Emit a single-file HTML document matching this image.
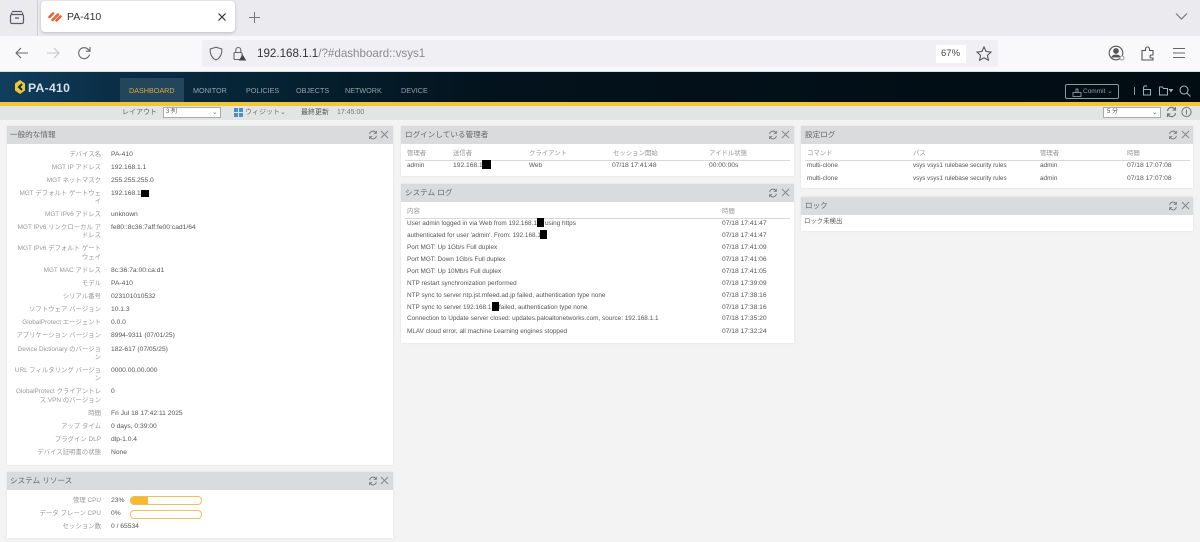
<!DOCTYPE html>
<html lang="ja"><head><meta charset="utf-8"><title>PA-410</title>
<style>
html,body{margin:0;padding:0;background:#f3f3f3}
body{width:1200px;height:542px;overflow:hidden;position:relative;font-family:"Liberation Sans","Noto Sans CJK JP",sans-serif;filter:blur(.3px)}
div,svg{position:absolute}
.t{white-space:nowrap;font-size:6.4px;line-height:9px;color:#555}
.d{font-size:6.7px}
.l{white-space:nowrap;font-size:6.4px;line-height:9px;color:#999;text-align:right;width:94px;left:7px}
.v{white-space:nowrap;font-size:6.7px;line-height:9px;color:#555;left:111px}
.h{white-space:nowrap;font-size:6.4px;line-height:9px;color:#959595}
.p{background:#fff;box-shadow:0 0 2px #ddd}
.ph{left:0;top:0;right:0;height:18px;background:#d9dbdc}
.pt{left:4px;top:3px;font-size:7.6px;line-height:12px;color:#666;white-space:nowrap}
.r{background:#000}
.ln{height:1px;background:#d8d8d8}
.nv{top:86px;font-size:7.2px;line-height:10px;color:#93a4af;white-space:nowrap}
.s{font-size:7px;color:#666}
</style></head><body>

<div style="left:0;top:0;width:1200px;height:36px;background:#eaeaef"></div>
<svg style="left:9px;top:9px" width="17" height="17" viewBox="0 0 17 17" fill="none" stroke="#5b5b66" stroke-width="1.2"><rect x="1.5" y="5.5" width="13" height="9" rx="1.5"/><path d="M3 2.5h10M6 9h4"/><path d="M2.5 5V3.500M13.500 5V3.500"/></svg>
<div style="left:37px;top:0;width:1px;height:36px;background:#cfcfd6"></div>
<div style="left:41px;top:1px;width:194px;height:31px;background:#fff;border-radius:4px;box-shadow:0 1px 3px rgba(0,0,0,.2)"></div>
<svg style="left:48px;top:11px" width="14" height="12" viewBox="0 0 14 12" fill="none" stroke="#e8633a" stroke-width="2.6" stroke-linecap="round"><path d="M1.500 6 5 2.500M4.500 9 10 3.500M8.500 9.500 12.500 5.500"/></svg>
<div class="t" style="left:67px;top:11px;font-size:10.500px;line-height:13px;color:#333">PA-410</div>
<svg style="left:217px;top:12px" width="10" height="10" viewBox="0 0 10 10" stroke="#333" stroke-width="1.200"><path d="M1.500 1.500l7 7M8.500 1.500l-7 7"/></svg>
<svg style="left:248px;top:11px" width="13" height="13" viewBox="0 0 13 13" stroke="#777" stroke-width="1"><path d="M6.500 1v11M1 6.500h11"/></svg>
<svg style="left:1175px;top:12px" width="13" height="9" viewBox="0 0 13 9" fill="none" stroke="#777" stroke-width="1.200"><path d="M1 1.500l5.500 5.500 5.500-5.500"/></svg>

<div style="left:0;top:36px;width:1200px;height:35px;background:#f9f9fb"></div>
<div style="left:0;top:71px;width:1200px;height:1px;background:#cfe0ea"></div>
<svg style="left:14px;top:46px" width="15" height="14" viewBox="0 0 15 14" fill="none" stroke="#666" stroke-width="1.100"><path d="M14 7H2M7 2 2 7l5 5"/></svg>
<svg style="left:46px;top:46px" width="15" height="14" viewBox="0 0 15 14" fill="none" stroke="#c4c4ca" stroke-width="1.100"><path d="M1 7h12M8 2l5 5-5 5"/></svg>
<svg style="left:77px;top:46px" width="15" height="15" viewBox="0 0 15 15" fill="none" stroke="#666" stroke-width="1.100"><path d="M12.500 8.500A5.500 5.500 0 1 1 11 3.200L13 5"/><path d="M13 1v4.200H8.800"/></svg>
<div style="left:202px;top:40px;width:796px;height:27px;background:#f0f0f4;border-radius:2px"></div>
<svg style="left:209px;top:46px" width="14" height="15" viewBox="0 0 14 15" fill="none" stroke="#666" stroke-width="1.100"><path d="M7 1.200 12.800 3c.2 5.500-1.500 9-5.800 11C2.700 12 1 8.500 1.200 3z"/></svg>
<svg style="left:233px;top:46px" width="14" height="15" viewBox="0 0 14 15" fill="none"><rect x="1" y="6.500" width="8" height="7" rx="1" stroke="#666" stroke-width="1.100"/><path d="M2.800 6.500V4a2.500 2.500 0 0 1 5 0v2.500" stroke="#666" stroke-width="1.100"/><path d="M9.500 8.500l3.800 6H5.800z" fill="#444"/></svg>
<div class="t" style="left:257px;top:46px;font-size:11.600px;line-height:16px;color:#8a8a90"><span style="color:#333">192.168.1.1</span>/?#dashboard::vsys1</div>
<div style="left:936px;top:45px;width:30px;height:18px;background:#fff"></div>
<div class="t" style="left:941px;top:48px;font-size:9.500px;line-height:12px;color:#444">67%</div>
<svg style="left:976px;top:46px" width="16" height="15" viewBox="0 0 16 15" fill="none" stroke="#555" stroke-width="1.100"><path d="M8 1l2.100 4.500 4.900.6-3.600 3.300 1 4.800L8 11.800l-4.400 2.400 1-4.800L1 6.100l4.900-.6z"/></svg>
<svg style="left:1108px;top:45px" width="18" height="17" viewBox="0 0 18 17" fill="none" stroke="#555" stroke-width="1.100"><circle cx="8" cy="8" r="6.800"/><circle cx="8" cy="6" r="2.300" fill="#555"/><path d="M4 12c1-2.500 7-2.500 8 0z" fill="#555"/><circle cx="14" cy="13" r="2" fill="#fff" stroke="#999"/></svg>
<svg style="left:1141px;top:46px" width="14" height="15" viewBox="0 0 14 15" fill="none" stroke="#555" stroke-width="1.100"><path d="M1 4.500h3.500V3a2 2 0 0 1 4 0v1.500H12V9h-1.500a1.500 1.500 0 0 0 0 3H12v2H1z"/></svg>
<svg style="left:1172px;top:47px" width="14" height="12" viewBox="0 0 14 12" stroke="#666" stroke-width="1.100"><path d="M1 1.500h12M1 6h12M1 10.500h12"/></svg>

<div style="left:0;top:72px;width:1200px;height:30px;background:linear-gradient(90deg,#103f5e 0,#0b2f48 100px,#05202f 300px,#03121c 500px,#020c13 100%)"></div>
<div style="left:0;top:102px;width:1200px;height:4px;background:#f2c535"></div>
<div style="left:120px;top:78px;width:64px;height:24px;background:#24465c"></div>
<svg style="left:14px;top:80px" width="12" height="14" viewBox="0 0 12 14"><path d="M6 0 11 3.500v7L6 14 1 10.500v-7z" fill="#f2c82f"/><path d="M8 4 5 7l3 3" fill="none" stroke="#0a2c44" stroke-width="2"/></svg>
<div class="t" style="left:28px;top:81px;font-size:12.200px;line-height:14px;font-weight:bold;color:#d5e0e7;letter-spacing:.3px">PA-410</div>
<div class="nv" style="left:129px;color:#d8a93a">DASHBOARD</div>
<div class="nv" style="left:193px">MONITOR</div>
<div class="nv" style="left:246px">POLICIES</div>
<div class="nv" style="left:296px">OBJECTS</div>
<div class="nv" style="left:345px">NETWORK</div>
<div class="nv" style="left:401px">DEVICE</div>
<div style="left:1065px;top:84px;width:54px;height:15px;border:1px solid #8a9aa5;border-radius:2px;box-sizing:border-box"></div>
<svg style="left:1072px;top:87px" width="10" height="10" viewBox="0 0 10 10" fill="none" stroke="#9fb0bb" stroke-width=".8"><path d="M1 9.500V5.500h8v4zM4 5.500V2h2v3.500"/></svg>
<div class="nv" style="left:1083px;top:87px;font-size:6.500px;line-height:9px;color:#8fa0ab">Commit ⌄</div>
<div style="left:1134px;top:87px;width:1px;height:8px;background:#8a9aa5"></div>
<svg style="left:1141px;top:85px" width="11" height="11" viewBox="0 0 11 11" fill="none" stroke="#9fb0bb"><path d="M2.500 4.500V2.500a2 2 0 0 1 3.500-1M2.500 4.500h7v5.500h-7z"/></svg>
<svg style="left:1159px;top:86px" width="14" height="10" viewBox="0 0 14 10" fill="none" stroke="#9fb0bb"><path d="M.5 1h3l1 1.500h4v6.500h-8z"/><path d="M10.500 3.500h3L12 5.500z" fill="#9fb0bb"/></svg>
<svg style="left:1179px;top:85px" width="12" height="12" viewBox="0 0 12 12" fill="none" stroke="#9fb0bb" stroke-width="1.100"><circle cx="5" cy="5" r="4"/><path d="M8 8l3.500 3.500"/></svg>

<div style="left:0;top:106px;width:1200px;height:14px;background:#e3e4e4"></div>
<div class="t s" style="left:122px;top:108px">レイアウト</div>
<div style="left:163px;top:107px;width:58px;height:11px;background:#fff;border:1px solid #aaa;box-sizing:border-box"></div>
<div class="t" style="left:166px;top:108px;font-size:6px">3 列</div>
<div class="t" style="left:212px;top:108px;color:#666">⌄</div>
<div style="left:234px;top:108px;width:4px;height:4px;background:#4a90c8"></div><div style="left:239px;top:108px;width:4px;height:4px;background:#4a90c8"></div>
<div style="left:234px;top:113px;width:4px;height:4px;background:#4a90c8"></div><div style="left:239px;top:113px;width:4px;height:4px;background:#4a90c8"></div>
<div class="t s" style="left:245px;top:108px;color:#777">ウィジット⌄</div>
<div class="t s" style="left:301px;top:108px;color:#555">最終更新</div>
<div class="t s" style="left:337px;top:108px;color:#777">17:45:00</div>
<div style="left:1103px;top:107px;width:58px;height:11px;background:#fff;border:1px solid #aaa;box-sizing:border-box"></div>
<div class="t" style="left:1107px;top:108px;font-size:6px">5 分</div>
<div class="t" style="left:1152px;top:108px;color:#666">⌄</div>
<svg style="left:1166px;top:106px" width="11" height="12" viewBox="0 0 11 12" fill="none" stroke="#777" stroke-width="1.200"><path d="M1.500 5A4 4 0 0 1 9 3.500M9.500 7A4 4 0 0 1 2 8.500M9.500 1v3H6.500M1.500 11V8h3"/></svg>
<svg style="left:1181px;top:106px" width="11" height="12" viewBox="0 0 11 12" fill="none" stroke="#777"><circle cx="5.500" cy="6" r="4.600"/><path d="M5.500 3.500v5"/></svg>

<!-- general -->
<div class="p" style="left:7px;top:126px;width:386px;height:339px">
<div class="ph"></div><div class="pt" style="left:3px">一般的な情報</div>
<svg style="left:361px;top:4px" width="10" height="10" viewBox="0 0 11 12" fill="none" stroke="#777" stroke-width="1.100"><path d="M1.500 5A4 4 0 0 1 9 3.500M9.500 7A4 4 0 0 1 2 8.500M9.500 1v3H6.500M1.500 11V8h3"/></svg>
<svg style="left:373px;top:4px" width="9" height="9" viewBox="0 0 9 9" stroke="#888"><path d="M1 1l7 7M8 1l-7 7"/></svg>
</div>
<div class="l" style="top:150px">デバイス名</div><div class="v" style="top:150px">PA-410</div>
<div class="l" style="top:163px">MGT IP アドレス</div><div class="v" style="top:163px">192.168.1.1</div>
<div class="l" style="top:176px">MGT ネットマスク</div><div class="v" style="top:176px">255.255.255.0</div>
<div class="l" style="top:189px">MGT デフォルト ゲートウェ</div><div class="l" style="top:197px">イ</div><div class="v" style="top:189px">192.168.1</div><div class="r" style="left:141px;top:190px;width:8px;height:7px"></div>
<div class="l" style="top:210px">MGT IPv6 アドレス</div><div class="v" style="top:210px">unknown</div>
<div class="l" style="top:223px">MGT IPv6 リンクローカル ア</div><div class="l" style="top:231px">ドレス</div><div class="v" style="top:223px">fe80::8c36:7aff:fe00:cad1/64</div>
<div class="l" style="top:244px">MGT IPv6 デフォルト ゲート</div><div class="l" style="top:253px">ウェイ</div>
<div class="l" style="top:266px">MGT MAC アドレス</div><div class="v" style="top:266px">8c:36:7a:00:ca:d1</div>
<div class="l" style="top:279px">モデル</div><div class="v" style="top:279px">PA-410</div>
<div class="l" style="top:292px">シリアル番号</div><div class="v" style="top:292px">023101010532</div>
<div class="l" style="top:305px">ソフトウェア バージョン</div><div class="v" style="top:305px">10.1.3</div>
<div class="l" style="top:318px">GlobalProtect エージェント</div><div class="v" style="top:318px">0.0.0</div>
<div class="l" style="top:331px">アプリケーション バージョン</div><div class="v" style="top:331px">8994-9311 (07/01/25)</div>
<div class="l" style="top:345px">Device Dictionary のバージョ</div><div class="l" style="top:353px">ン</div><div class="v" style="top:345px">182-617 (07/05/25)</div>
<div class="l" style="top:366px">URL フィルタリング バージョ</div><div class="l" style="top:374px">ン</div><div class="v" style="top:366px">0000.00.00.000</div>
<div class="l" style="top:387px">GlobalProtect クライアントレ</div><div class="l" style="top:396px">ス VPN のバージョン</div><div class="v" style="top:387px">0</div>
<div class="l" style="top:409px">時間</div><div class="v" style="top:409px">Fri Jul 18 17:42:11 2025</div>
<div class="l" style="top:422px">アップ タイム</div><div class="v" style="top:422px">0 days, 0:39:00</div>
<div class="l" style="top:435px">プラグイン DLP</div><div class="v" style="top:435px">dlp-1.0.4</div>
<div class="l" style="top:448px">デバイス証明書の状態</div><div class="v" style="top:448px">None</div>

<!-- resources -->
<div class="p" style="left:7px;top:472px;width:386px;height:66px">
<div class="ph"></div><div class="pt" style="left:3px">システム リソース</div>
<svg style="left:361px;top:4px" width="10" height="10" viewBox="0 0 11 12" fill="none" stroke="#777" stroke-width="1.100"><path d="M1.500 5A4 4 0 0 1 9 3.500M9.500 7A4 4 0 0 1 2 8.500M9.500 1v3H6.500M1.500 11V8h3"/></svg>
<svg style="left:373px;top:4px" width="9" height="9" viewBox="0 0 9 9" stroke="#888"><path d="M1 1l7 7M8 1l-7 7"/></svg>
</div>
<div class="l" style="top:496px">管理 CPU</div><div class="v" style="top:496px">23%</div>
<div style="left:130px;top:496px;width:72px;height:9px;border:1px solid #e8c25a;border-radius:4px;box-sizing:border-box;overflow:hidden;background:#fff"><div style="left:0;top:0;width:17px;height:7px;background:#f5b82e"></div></div>
<div class="l" style="top:509px">データ プレーン CPU</div><div class="v" style="top:509px">0%</div>
<div style="left:130px;top:510px;width:72px;height:9px;border:1px solid #e8c25a;border-radius:4px;box-sizing:border-box;background:#fff"></div>
<div class="l" style="top:522px">セッション数</div><div class="v" style="top:522px">0 / 65534</div>

<!-- admins -->
<div class="p" style="left:401px;top:126px;width:393px;height:50px">
<div class="ph"></div><div class="pt">ログインしている管理者</div>
<svg style="left:367px;top:4px" width="10" height="10" viewBox="0 0 11 12" fill="none" stroke="#777" stroke-width="1.100"><path d="M1.500 5A4 4 0 0 1 9 3.500M9.500 7A4 4 0 0 1 2 8.500M9.500 1v3H6.500M1.500 11V8h3"/></svg>
<svg style="left:380px;top:4px" width="9" height="9" viewBox="0 0 9 9" stroke="#888"><path d="M1 1l7 7M8 1l-7 7"/></svg>
</div>
<div class="h" style="left:407px;top:149px">管理者</div><div class="h" style="left:453px;top:149px">送信者</div><div class="h" style="left:529px;top:149px">クライアント</div><div class="h" style="left:613px;top:149px">セッション開始</div><div class="h" style="left:709px;top:149px">アイドル状態</div>
<div class="ln" style="left:405px;top:160px;width:385px"></div>
<div class="t" style="left:407px;top:161px">admin</div><div class="t d" style="left:453px;top:161px">192.168.1</div><div class="r" style="left:482px;top:160px;width:9px;height:9px"></div><div class="t" style="left:529px;top:161px">Web</div><div class="t d" style="left:612px;top:161px">07/18 17:41:48</div><div class="t d" style="left:709px;top:161px">00:00:00s</div>

<!-- syslog -->
<div class="p" style="left:401px;top:184px;width:393px;height:159px">
<div class="ph"></div><div class="pt">システム ログ</div>
<svg style="left:367px;top:4px" width="10" height="10" viewBox="0 0 11 12" fill="none" stroke="#777" stroke-width="1.100"><path d="M1.500 5A4 4 0 0 1 9 3.500M9.500 7A4 4 0 0 1 2 8.500M9.500 1v3H6.500M1.500 11V8h3"/></svg>
<svg style="left:380px;top:4px" width="9" height="9" viewBox="0 0 9 9" stroke="#888"><path d="M1 1l7 7M8 1l-7 7"/></svg>
</div>
<div class="h" style="left:407px;top:207px">内容</div><div class="h" style="left:722px;top:207px">時間</div>
<div class="ln" style="left:405px;top:218px;width:385px"></div>
<div class="t" style="left:407px;top:219px">User admin logged in via Web from 192.168.1</div><div class="r" style="left:537px;top:218px;width:7px;height:9px"></div><div class="t" style="left:545px;top:219px">using https</div><div class="t d" style="left:722px;top:219px">07/18 17:41:47</div>
<div class="t" style="left:407px;top:231px">authenticated for user 'admin'. From: 192.168.1</div><div class="r" style="left:540px;top:230px;width:7px;height:9px"></div><div class="t d" style="left:722px;top:231px">07/18 17:41:47</div>
<div class="t" style="left:407px;top:243px">Port MGT: Up 1Gb/s Full duplex</div><div class="t d" style="left:722px;top:243px">07/18 17:41:09</div>
<div class="t" style="left:407px;top:255px">Port MGT: Down 1Gb/s Full duplex</div><div class="t d" style="left:722px;top:255px">07/18 17:41:06</div>
<div class="t" style="left:407px;top:267px">Port MGT: Up 10Mb/s Full duplex</div><div class="t d" style="left:722px;top:267px">07/18 17:41:05</div>
<div class="t" style="left:407px;top:279px">NTP restart synchronization performed</div><div class="t d" style="left:722px;top:279px">07/18 17:39:09</div>
<div class="t" style="left:407px;top:291px">NTP sync to server ntp.jst.mfeed.ad.jp failed, authentication type none</div><div class="t d" style="left:722px;top:291px">07/18 17:38:16</div>
<div class="t" style="left:407px;top:303px">NTP sync to server 192.168.1</div><div class="r" style="left:492px;top:302px;width:7px;height:9px"></div><div class="t" style="left:499px;top:303px">failed, authentication type none</div><div class="t d" style="left:722px;top:303px">07/18 17:38:16</div>
<div class="t" style="left:407px;top:314px">Connection to Update server closed: updates.paloaltonetworks.com, source: 192.168.1.1</div><div class="t d" style="left:722px;top:314px">07/18 17:35:20</div>
<div class="t" style="left:407px;top:327px">MLAV cloud error, all machine Learning engines stopped</div><div class="t d" style="left:722px;top:327px">07/18 17:32:24</div>

<!-- config -->
<div class="p" style="left:801px;top:126px;width:392px;height:62px">
<div class="ph"></div><div class="pt">設定ログ</div>
<svg style="left:367px;top:4px" width="10" height="10" viewBox="0 0 11 12" fill="none" stroke="#777" stroke-width="1.100"><path d="M1.500 5A4 4 0 0 1 9 3.500M9.500 7A4 4 0 0 1 2 8.500M9.500 1v3H6.500M1.500 11V8h3"/></svg>
<svg style="left:380px;top:4px" width="9" height="9" viewBox="0 0 9 9" stroke="#888"><path d="M1 1l7 7M8 1l-7 7"/></svg>
</div>
<div class="h" style="left:807px;top:149px">コマンド</div><div class="h" style="left:913px;top:149px">パス</div><div class="h" style="left:1040px;top:149px">管理者</div><div class="h" style="left:1127px;top:149px">時間</div>
<div class="ln" style="left:805px;top:160px;width:385px"></div>
<div class="t" style="left:807px;top:161px">multi-clone</div><div class="t" style="left:913px;top:161px;font-size:6.200px">vsys vsys1 rulebase security rules</div><div class="t" style="left:1040px;top:161px">admin</div><div class="t d" style="left:1127px;top:161px">07/18 17:07:08</div>
<div class="t" style="left:807px;top:174px">multi-clone</div><div class="t" style="left:913px;top:174px;font-size:6.200px">vsys vsys1 rulebase security rules</div><div class="t" style="left:1040px;top:174px">admin</div><div class="t d" style="left:1127px;top:174px">07/18 17:07:08</div>

<!-- lock -->
<div class="p" style="left:801px;top:197px;width:392px;height:34px">
<div class="ph"></div><div class="pt">ロック</div>
<svg style="left:367px;top:4px" width="10" height="10" viewBox="0 0 11 12" fill="none" stroke="#777" stroke-width="1.100"><path d="M1.500 5A4 4 0 0 1 9 3.500M9.500 7A4 4 0 0 1 2 8.500M9.500 1v3H6.500M1.500 11V8h3"/></svg>
<svg style="left:380px;top:4px" width="9" height="9" viewBox="0 0 9 9" stroke="#888"><path d="M1 1l7 7M8 1l-7 7"/></svg>
</div>
<div class="t" style="left:804px;top:217px">ロック未検出</div>
</body></html>
